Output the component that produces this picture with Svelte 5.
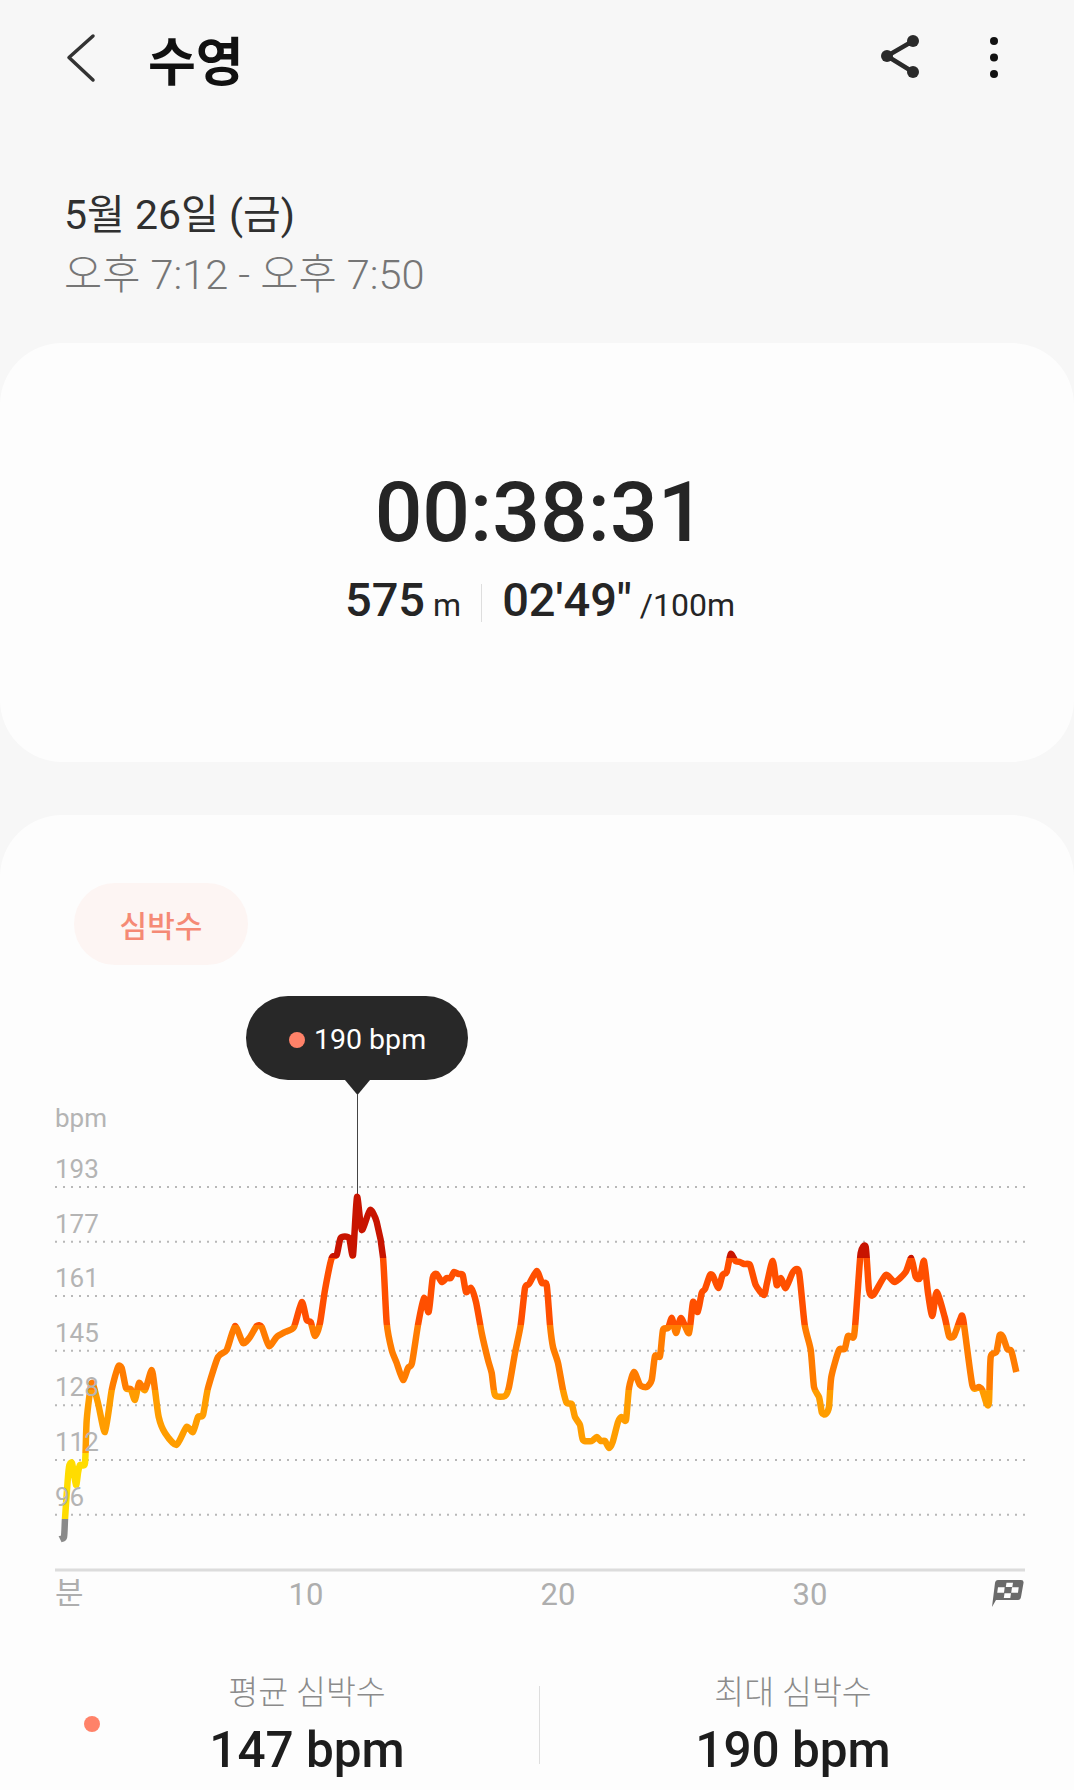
<script>
	// heart rate trace, in page pixels (the chart svg's viewBox keeps page coordinates)
	const trace = [
		[60, 1539], [64, 1537], [65, 1519], [67, 1490], [69, 1467], [72, 1463], [76, 1485], [78, 1473], [80, 1465], [85, 1463],
		[86.7, 1420], [91.7, 1383], [98, 1403], [105, 1432], [111.7, 1390], [118, 1367], [121.7, 1368], [126, 1388], [130.7, 1389],
		[135, 1400], [139, 1383], [145, 1390], [151.7, 1370], [155, 1390], [158.7, 1417], [165, 1433], [176.5, 1445], [186.4, 1427],
		[193, 1432], [198, 1417], [203, 1415], [208, 1388], [218, 1357], [226.7, 1350], [235, 1326], [243, 1343], [250, 1337],
		[256.7, 1326], [261.7, 1327], [269, 1346], [276.7, 1337], [285, 1332], [294, 1327], [301.7, 1302], [306.7, 1320], [310.7, 1322],
		[315, 1336], [320, 1323], [325, 1290], [331.7, 1258], [336.7, 1255], [340.7, 1238], [349, 1238], [353, 1255], [357, 1197],
		[361.7, 1230], [370, 1210], [376.7, 1222], [383, 1257], [386.7, 1323], [391.7, 1350], [396.7, 1363], [403, 1380], [408, 1368],
		[412, 1363], [418, 1325], [424, 1298], [428.7, 1312], [432.7, 1278], [436.7, 1274], [441.7, 1282], [446.7, 1278], [450.7, 1278],
		[454, 1272], [458.3, 1274], [462.7, 1275], [466, 1292], [471, 1288], [476, 1302], [481.7, 1333], [488, 1360], [491.7, 1373],
		[495, 1395], [505, 1396], [509, 1387], [515, 1353], [520.7, 1325], [525, 1288], [529, 1284], [536.7, 1271], [542, 1283],
		[546.7, 1285], [550, 1325], [553, 1347], [558, 1363], [563, 1390], [566.7, 1403], [571.7, 1404], [575, 1417], [580, 1425],
		[583, 1440], [591.7, 1441], [596.7, 1437], [600.7, 1441], [605, 1441], [609, 1448], [612.7, 1442], [618, 1422], [621.7, 1417],
		[626, 1420], [629, 1388], [634, 1372], [640, 1385], [646.7, 1387], [651.7, 1380], [655, 1356], [660, 1356], [663, 1330],
		[668, 1328], [672, 1318], [676, 1333], [681, 1318], [689, 1333], [693, 1302], [697.7, 1312], [701.7, 1293], [705, 1289],
		[710, 1275], [713, 1276], [718.4, 1288], [722.5, 1275], [726.7, 1272], [730.7, 1254], [735.5, 1261], [740, 1262], [744, 1264],
		[750, 1265], [755.7, 1285], [764, 1295], [767, 1283], [772.7, 1261], [776.7, 1285], [781, 1278], [785.7, 1288], [793, 1272],
		[799, 1272], [804.7, 1325], [810.7, 1350], [814, 1387], [819, 1397], [822, 1413], [825.7, 1414], [829, 1407], [831.3, 1377],
		[839, 1350], [844.7, 1349], [848, 1336], [854, 1336], [857.3, 1297], [860.7, 1253], [865.7, 1247], [869, 1290], [873.3, 1295],
		[885.7, 1275], [894.7, 1282], [905.7, 1272], [911.3, 1258], [915.7, 1277], [920, 1278], [924, 1261], [928, 1293], [932.3, 1316],
		[936.7, 1292], [944.7, 1317], [949, 1336], [954, 1336], [960.7, 1318], [963.3, 1320], [972.3, 1385], [979, 1387], [982.3, 1390],
		[986.7, 1404], [989, 1402], [990.7, 1357], [996.3, 1352], [999.7, 1335], [1003, 1337], [1007.3, 1349], [1011.3, 1351], [1016.3, 1372]
	];

	function smooth(pts) {
		let d = `M${pts[0][0]} ${pts[0][1]}`;
		for (let i = 0; i < pts.length - 1; i++) {
			const p0 = pts[i - 1] ?? pts[i];
			const p1 = pts[i];
			const p2 = pts[i + 1];
			const p3 = pts[i + 2] ?? p2;
			const k = 0.11;
			const c1x = p1[0] + (p2[0] - p0[0]) * k;
			const c1y = p1[1] + (p2[1] - p0[1]) * k;
			const c2x = p2[0] - (p3[0] - p1[0]) * k;
			const c2y = p2[1] - (p3[1] - p1[1]) * k;
			d += `C${c1x.toFixed(1)} ${c1y.toFixed(1)} ${c2x.toFixed(1)} ${c2y.toFixed(1)} ${p2[0]} ${p2[1]}`;
		}
		return d;
	}

	const linePath = smooth(trace);

	// heart rate zones, hard colour stops down the chart
	const zoneTop = 1190;
	const zoneBottom = 1545;
	const zones = [
		[1258, '#c81400'],
		[1325, '#ff4f00'],
		[1390, '#ff7c00'],
		[1453, '#ff9d00'],
		[1519, '#ffdc00'],
		[1545, '#8a8a8a']
	];
	const stops = [];
	let prev = 0;
	for (const [edge, color] of zones) {
		const end = ((edge - zoneTop) / (zoneBottom - zoneTop)) * 100;
		stops.push({ offset: prev, color }, { offset: end, color });
		prev = end;
	}

	const gridLines = [1187, 1241.7, 1296, 1350.7, 1405.3, 1460, 1514.7];
	const yLabels = ['193', '177', '161', '145', '128', '112', '96'];
	const xLabels = [
		{ x: 306, text: '10' },
		{ x: 558, text: '20' },
		{ x: 810, text: '30' }
	];
</script>

<div class="page">
	<header class="appbar">
		<svg class="back" width="30" height="50" viewBox="0 0 30 50">
			<path d="M27 3 3 24.500 27 47" />
		</svg>
		<h1>수영</h1>
		<svg class="share" width="40" height="46" viewBox="0 0 40 46">
			<path d="M32 6 6 21 32 37" />
			<circle cx="32" cy="6" r="6" />
			<circle cx="6" cy="21" r="6" />
			<circle cx="32" cy="37" r="6" />
		</svg>
		<svg class="more" width="10" height="44" viewBox="0 0 10 44">
			<circle cx="5" cy="5" r="4" />
			<circle cx="5" cy="21.500" r="4" />
			<circle cx="5" cy="38" r="4" />
		</svg>
	</header>

	<section class="when">
		<div class="date">5월 26일 (금)</div>
		<div class="range">오후 7:12 - 오후 7:50</div>
	</section>

	<section class="card summary">
		<div class="duration">00:38:31</div>
		<div class="metrics">
			<span class="big">575</span><span class="small gap">m</span>
			<i class="vr"></i>
			<span class="big">02'49"</span><span class="small">/100m</span>
		</div>
	</section>

	<section class="card heart">
		<div class="pill">심박수</div>
		<div class="chart">
			<svg width="1074" height="670" viewBox="0 965 1074 670">
				<defs>
					<linearGradient id="zones" gradientUnits="userSpaceOnUse" x1="0" x2="0" y1={zoneTop} y2={zoneBottom}>
						{#each stops as s}
							<stop offset="{s.offset}%" stop-color={s.color} />
						{/each}
					</linearGradient>
				</defs>

				{#each gridLines as y}
					<line class="grid" x1="55" x2="1026" y1={y} y2={y} />
				{/each}
				<line class="axis" x1="55" x2="1025" y1="1570" y2="1570" />

				<polygon class="tip" points="345,1080 357.500,1095 370,1080" />
				<line class="pointer" x1="357.500" x2="357.500" y1="1094" y2="1200" />

				<path class="trace" d={linePath} stroke="url(#zones)" />

				<text class="tick" x="55" y="1127">bpm</text>
				{#each yLabels as label, i}
					<text class="tick" x="55" y={gridLines[i] - 9}>{label}</text>
				{/each}

				<text class="tick low" x="55" y="1604">분</text>
				{#each xLabels as t}
					<text class="tick low mid" x={t.x} y="1605">{t.text}</text>
				{/each}

				<path class="flag" d="M998 1580H1021Q1024 1580 1023.500 1583L1021 1597Q1020.500 1600 1018 1600H996L992 1607 995 1583Q995.500 1580 998 1580Z" />
				<path class="flag-check" d="M1006.500 1582.700H1013L1012.300 1587H1005.800ZM998 1587.300H1004.700L1004 1592.700H997.200ZM1012 1587.300H1018.700L1018 1592.700H1011.200ZM1004.500 1593.300H1011L1010.300 1598H1003.800Z" />
			</svg>
			<div class="bubble"><i class="dot"></i>190 bpm</div>
		</div>

		<div class="stats">
			<i class="dot side"></i>
			<div class="stat left">
				<div class="stat-label">평균 심박수</div>
				<div class="stat-value">147 bpm</div>
			</div>
			<i class="vr tall"></i>
			<div class="stat right">
				<div class="stat-label">최대 심박수</div>
				<div class="stat-value">190 bpm</div>
			</div>
		</div>
	</section>
</div>

<style>
	:global(body) {
		margin: 0;
		background: #f7f7f7;
	}
	.page {
		width: 1074px;
		height: 1790px;
		overflow: hidden;
		background: #f7f7f7;
		color: #252525;
		font-family: Roboto, "Noto Sans CJK KR", sans-serif;
	}

	.appbar {
		display: flex;
		align-items: center;
		height: 116px;
		padding: 0 75px 0 66px;
	}
	.appbar h1 {
		margin: 0 0 0 52px;
		font-size: 52px;
		font-weight: 700;
		color: #111;
		flex: 1;
	}
	.back path {
		fill: none;
		stroke: #333;
		stroke-width: 3.500;
		stroke-linecap: round;
		stroke-linejoin: round;
	}
	.share {
		margin-right: 68px;
	}
	.share path {
		fill: none;
		stroke: #2a2a2a;
		stroke-width: 4.500;
	}
	.share circle {
		fill: #2a2a2a;
	}
	.more circle {
		fill: #111;
	}

	.when {
		padding: 69px 64px 0;
		font-size: 41px;
		font-weight: 400;
		line-height: 60px;
	}
	.date {
		color: #303030;
	}
	.range {
		color: #767676;
		font-weight: 300;
		font-size: 41.500px;
		line-height: 59px;
	}

	.card {
		background: #fdfdfd;
		border-radius: 62px;
	}
	.summary {
		height: 419px;
		margin-top: 39px;
		display: flex;
		flex-direction: column;
		align-items: center;
		padding: 124px 6px 0 12px;
		box-sizing: border-box;
	}
	.duration {
		font-size: 84px;
		font-weight: 500;
		line-height: 92px;
	}
	.metrics {
		display: flex;
		align-items: baseline;
		margin-top: 14px;
		line-height: 54px;
	}
	.big {
		font-size: 47px;
		font-weight: 500;
	}
	.small {
		font-size: 32px;
		font-weight: 400;
		margin-left: 8px;
	}
	.vr {
		display: block;
		width: 1px;
		background: #dedede;
	}
	.metrics .vr {
		height: 38px;
		margin: 0 20px;
		align-self: center;
	}

	.heart {
		height: 1100px;
		margin-top: 53px;
		padding-top: 68px;
		box-sizing: border-box;
	}
	.pill {
		width: 174px;
		height: 82px;
		margin-left: 74px;
		border-radius: 41px;
		background: #fdf5f3;
		color: #f58a75;
		font-size: 30px;
		font-weight: 500;
		display: flex;
		align-items: center;
		justify-content: center;
	}
	.chart {
		position: relative;
		height: 670px;
	}
	.chart svg {
		display: block;
	}
	.grid {
		stroke: #b8b8b8;
		stroke-width: 2;
		stroke-dasharray: 2 6;
	}
	.axis {
		stroke: #dcdcdc;
		stroke-width: 3;
	}
	.tip {
		fill: #282828;
	}
	.pointer {
		stroke: #444;
		stroke-width: 1;
	}
	.trace {
		fill: none;
		stroke-width: 6.500;
		stroke-linejoin: round;
		stroke-linecap: butt;
	}
	.tick {
		fill: #b4b4b4;
		font-size: 26px;
	}
	.low {
		font-size: 31px;
		fill: #aeaeae;
	}
	.mid {
		text-anchor: middle;
	}
	.flag {
		fill: #6a6a6a;
	}
	.flag-check {
		fill: #fdfdfd;
	}

	.bubble {
		position: absolute;
		left: 246px;
		top: 31px;
		width: 222px;
		height: 84px;
		box-sizing: border-box;
		padding: 3px 0 0 43px;
		border-radius: 42px;
		background: #282828;
		color: #fff;
		font-size: 28.500px;
		display: flex;
		align-items: center;
		gap: 9px;
	}
	.dot {
		display: block;
		width: 16px;
		height: 16px;
		border-radius: 50%;
		background: #ff8269;
	}

	.stats {
		position: relative;
		display: flex;
		margin-top: 38px;
	}
	.dot.side {
		position: absolute;
		left: 84px;
		top: 43px;
	}
	.stat {
		position: absolute;
		top: 0;
		width: 300px;
		text-align: center;
	}
	.stat.left {
		left: 157px;
	}
	.stat.right {
		left: 643px;
	}
	.stat-label {
		font-size: 32.500px;
		font-weight: 300;
		color: #8b8b8b;
		line-height: 40px;
	}
	.stat-value {
		font-size: 49.500px;
		font-weight: 500;
		line-height: 56px;
		margin-top: 9px;
		color: #1d1d1d;
	}
	.vr.tall {
		height: 78px;
		margin: 13px 0 0 539px;
	}
</style>
